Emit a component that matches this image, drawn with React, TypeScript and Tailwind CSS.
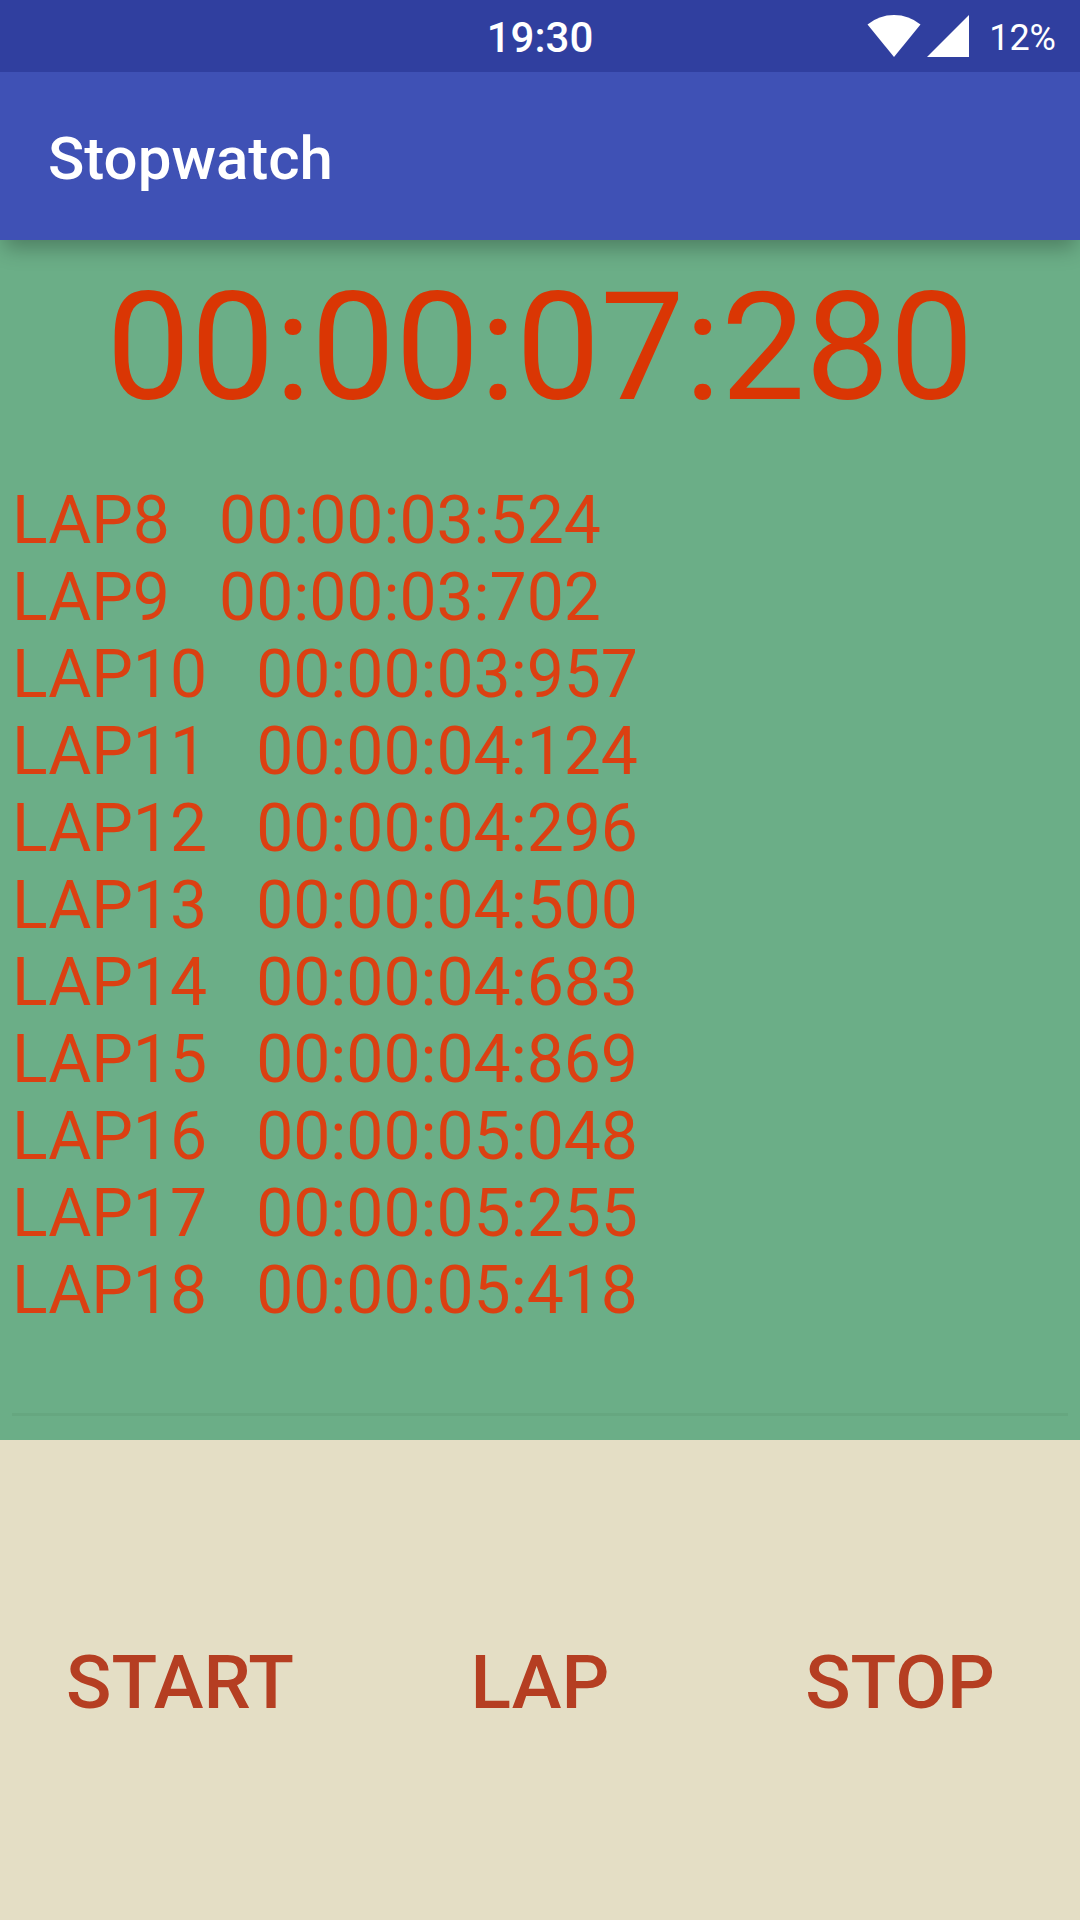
const laps: [string, string][] = [
  ["LAP8", "00:00:03:524"],
  ["LAP9", "00:00:03:702"],
  ["LAP10", "00:00:03:957"],
  ["LAP11", "00:00:04:124"],
  ["LAP12", "00:00:04:296"],
  ["LAP13", "00:00:04:500"],
  ["LAP14", "00:00:04:683"],
  ["LAP15", "00:00:04:869"],
  ["LAP16", "00:00:05:048"],
  ["LAP17", "00:00:05:255"],
  ["LAP18", "00:00:05:418"],
];

function StatusBar() {
  return (
    <div className="grid h-[72px] grid-cols-[1fr_auto_1fr] items-center bg-[#303f9f] px-6 text-white">
      <span className="col-start-2 pt-1 text-[42px] leading-[68px] font-medium">19:30</span>
      <div className="flex items-center justify-end">
        <svg className="h-[42px] w-[54px]" viewBox="0 0 54 42" fill="currentColor" role="img" aria-label="Wi-Fi">
          <path d="M27 42 L0.5 9.5 Q12 0 27 0 T53.5 9.5 Z" />
        </svg>
        <svg className="ml-1.5 h-[42px] w-[42px]" viewBox="0 0 42 42" fill="currentColor" role="img" aria-label="Signal">
          <path d="M42 0V42H0Z" />
        </svg>
        <span className="ml-5 pt-1 text-[36px] leading-[68px]">12%</span>
      </div>
    </div>
  );
}

export default function App() {
  return (
    <div className="flex min-h-screen flex-col bg-[#6bae87] font-[Roboto,sans-serif]">
      <header className="z-10 shadow-[0_12px_20px_-4px_rgba(0,0,0,0.28)]">
        <StatusBar />
        <div className="flex h-[168px] items-center bg-[#3f51b5] px-12 pt-1.5">
          <h1 className="text-[60px] font-medium text-white">Stopwatch</h1>
        </div>
      </header>
      <main className="flex flex-1 flex-col px-3">
        <div className="pt-4 text-center text-[150px] leading-[184px] text-[#da3604]">00:00:07:280</div>
        <ol className="mt-[42px] text-[66px] leading-[77px] text-[#db4012]">
          {laps.map(([name, time]) => (
            <li key={name} className="whitespace-pre">{name + "   " + time}</li>
          ))}
        </ol>
        <div className="mt-auto mb-6 h-[3px] bg-[#66a780]" />
      </main>
      <footer className="grid h-[480px] grid-cols-3 bg-[#e4dec5] pt-1 text-[75px] font-medium text-[#b53e22]">
        <button type="button">START</button>
        <button type="button">LAP</button>
        <button type="button">STOP</button>
      </footer>
    </div>
  );
}
